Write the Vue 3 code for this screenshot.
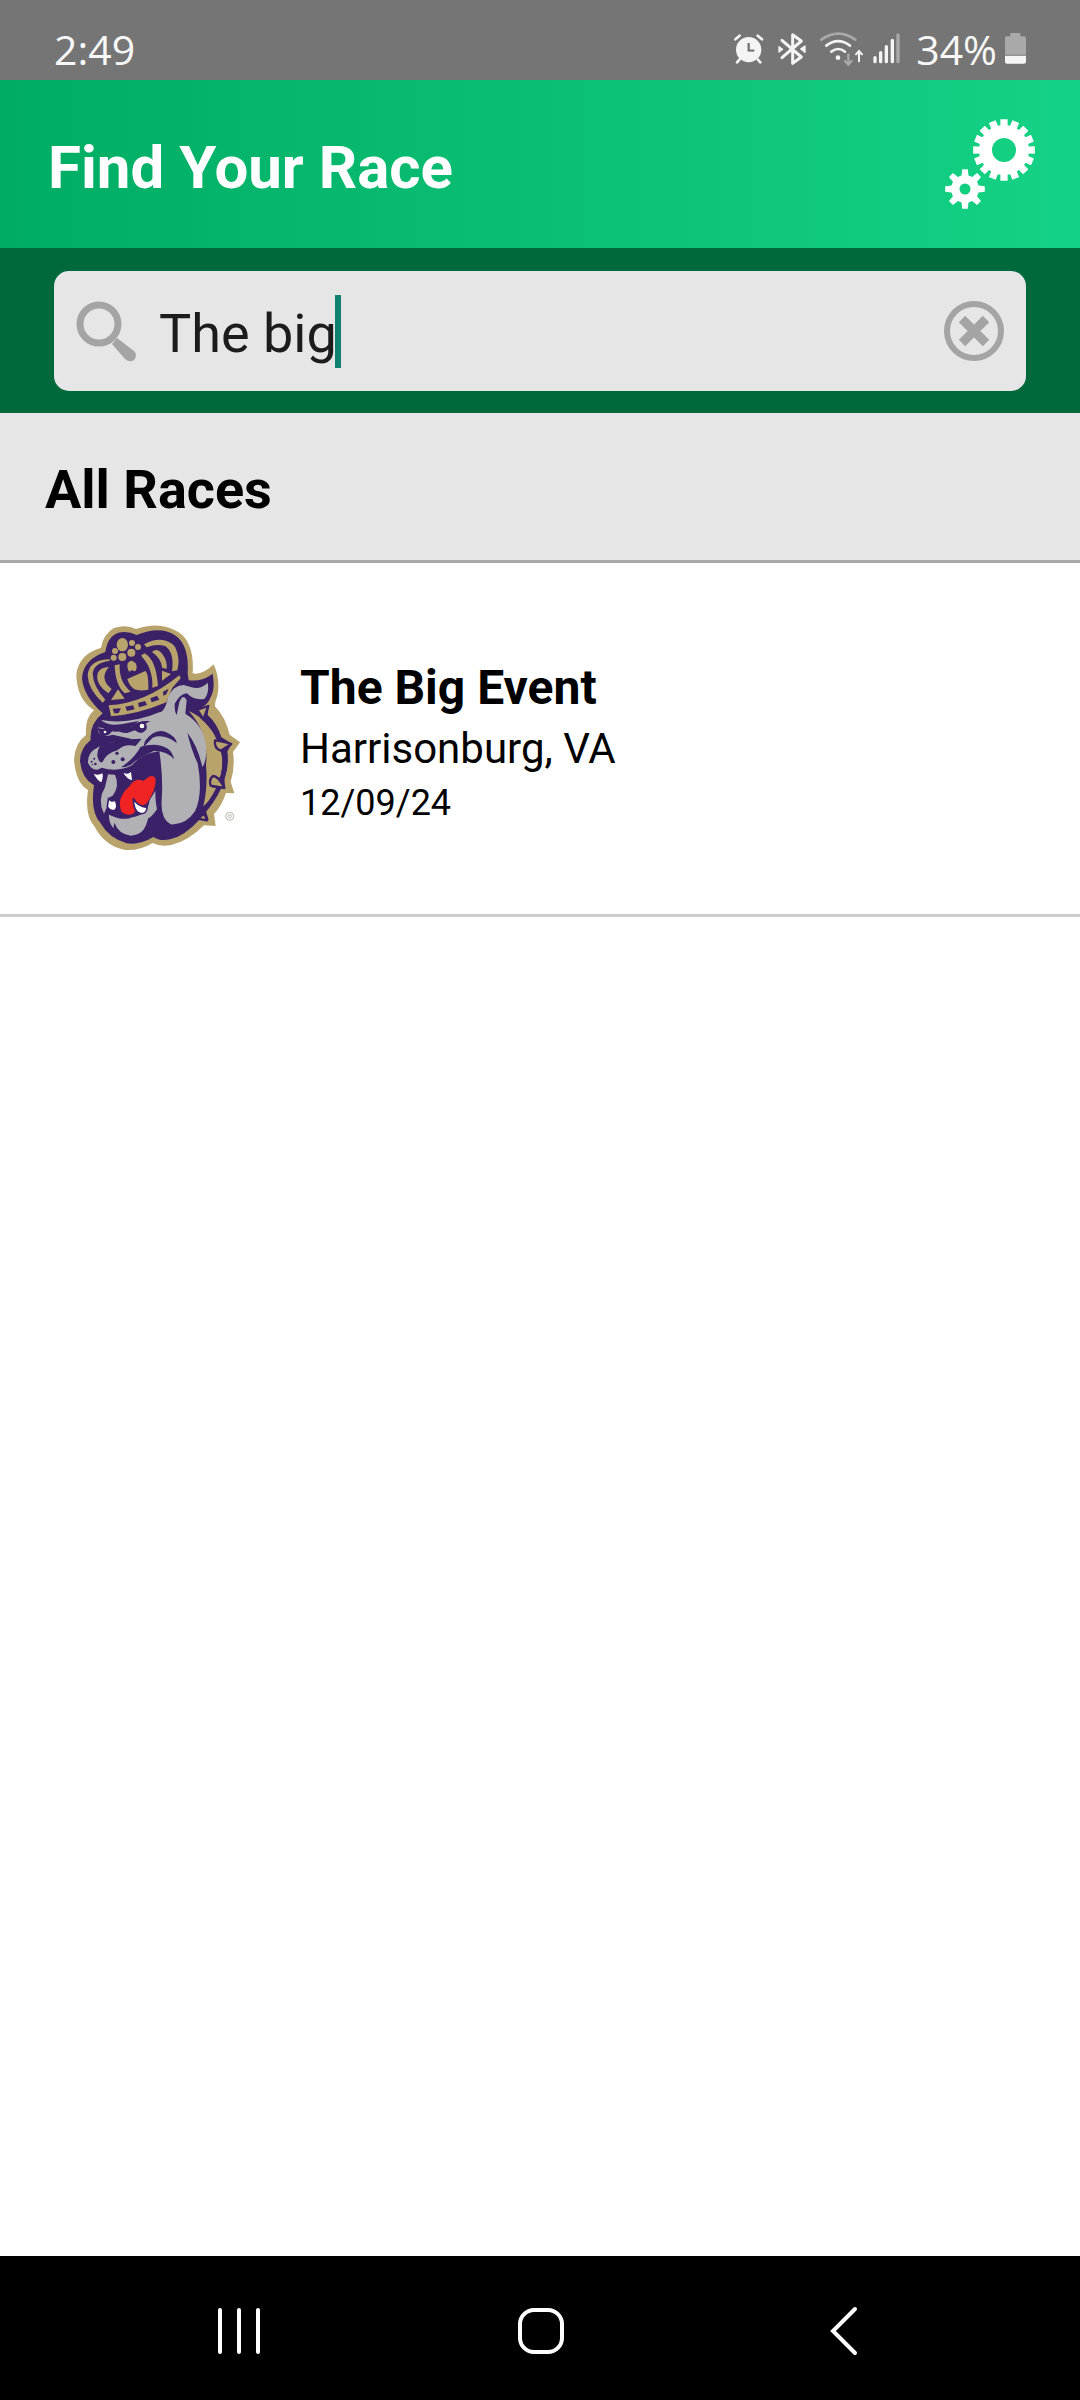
<script setup>
import { ref } from 'vue'

const query = ref('The big')
const races = [{ name: 'The Big Event', place: 'Harrisonburg, VA', date: '12/09/24' }]

function gear(cx, cy, teeth, outer, root, tip, base, hole) {
  const step = (Math.PI * 2) / teeth
  const point = (r, a) => `${(cx + r * Math.sin(a)).toFixed(2)} ${(cy - r * Math.cos(a)).toFixed(2)}`
  const points = []
  for (let i = 0; i < teeth; i++) {
    const a = i * step
    points.push(point(root, a - base * step), point(outer, a - tip * step))
    points.push(point(outer, a + tip * step), point(root, a + base * step))
  }
  return `M${points.join('L')}ZM${cx - hole} ${cy}a${hole} ${hole} 0 1 0 ${hole * 2} 0a${hole} ${hole} 0 1 0 ${-hole * 2} 0Z`
}

const gears = gear(59, 31, 16, 31, 25, 0.3, 0.37, 12) + gear(20, 70, 8, 20, 14, 0.18, 0.32, 5.5)
</script>

<template>
  <div class="screen">
    <div class="status">
      <span class="status-text time">2:49</span>
      <div class="status-icons">
        <svg width="33" height="36" viewBox="99 93 99 108" aria-label="Alarm">
          <g stroke="#f4f4f4" stroke-linecap="round" fill="none">
            <path d="M106 118l13-11M186 118l-13-11" stroke-width="8" />
            <path d="M119 178l-8 9M173 178l8 9" stroke-width="8" />
          </g>
          <circle cx="146" cy="149" r="38" fill="#f4f4f4" />
          <path d="M146 129v22l17 1" stroke="#757575" stroke-width="7" fill="none" />
        </svg>
        <svg width="30" height="36" viewBox="234 93 90 108" aria-label="Bluetooth">
          <path d="M246 121l58 50-26 19v-86l26 19-58 50" fill="none" stroke="#f4f4f4" stroke-width="9" stroke-linejoin="round" stroke-linecap="round" />
          <path d="M237 140l11 8-11 8zM315 138l-13 9 13 10z" fill="#f4f4f4" stroke="#f4f4f4" stroke-width="4" stroke-linejoin="round" />
        </svg>
        <svg width="40" height="36" viewBox="360 93 120 108" aria-label="Wi-Fi">
          <g fill="none" stroke="#f4f4f4" stroke-width="8" stroke-linecap="round">
            <path d="M364 119q51-36 102 0" stroke="#a9a9a9" />
            <path d="M379 137q35-27 71 0" />
            <path d="M394 155q21-16 41 0" />
            <path d="M445 163v28M435 183l10 11 10-11" stroke="#a9a9a9" stroke-width="7" />
            <path d="M477 184v-30M468 163l9-10 9 10" stroke-width="6" />
          </g>
          <circle cx="414" cy="173" r="7" fill="#f4f4f4" />
        </svg>
        <svg width="32" height="36" viewBox="516 93 96 108" aria-label="Signal">
          <g stroke="#f4f4f4" stroke-width="10" stroke-linecap="round">
            <path d="M525 173v12M542 158v27M559 140v45M577 121v64" />
            <path d="M594 105v80" stroke="#a9a9a9" />
          </g>
        </svg>
        <span class="status-text">34%</span>
        <svg class="battery" width="21" height="36" viewBox="915 93 63 108" aria-label="Battery">
          <path d="M931 99h30v10h11q6 0 6 6v49h-63v-49q0-6 6-6h10z" fill="#a9a9a9" />
          <path d="M915 167h63v18q0 6-6 6h-51q-6 0-6-6z" fill="#f6f6f6" />
        </svg>
      </div>
    </div>

    <header class="header">
      <h1>Find Your Race</h1>
      <button type="button" class="plain" aria-label="Settings">
        <svg width="90" height="90" viewBox="0 4 90 90">
          <path :d="gears" fill="#fff" fill-rule="evenodd" />
        </svg>
      </button>
    </header>

    <div class="search">
      <div class="search-box">
        <label class="search-label" for="race-search">
          <svg width="60" height="60" viewBox="0 0 60 60" role="img" aria-label="Search races">
            <circle cx="22" cy="23" r="19" fill="none" stroke="#a4a4a4" stroke-width="7" />
            <path d="M35 43l13 15q5 4 9 1 4-5 0-9L40 37z" fill="#a4a4a4" />
          </svg>
          <input id="race-search" v-model="query" type="text" autocomplete="off" />
          <span class="caret"></span>
        </label>
        <button type="button" class="plain" aria-label="Clear search" @click="query = ''">
          <svg width="60" height="60" viewBox="0 0 60 60">
            <circle cx="30" cy="30" r="27" fill="none" stroke="#a4a4a4" stroke-width="6" />
            <path d="M18 18l24 24M42 18L18 42" stroke="#a4a4a4" stroke-width="9" />
          </svg>
        </button>
      </div>
    </div>

    <h2 class="section">All Races</h2>

    <main class="list">
      <article v-for="race in races" :key="race.name" class="race">
        <svg class="mascot" width="190" height="250" viewBox="0 0 570 750" role="img" aria-label="Bulldog mascot">
          <!-- gold outer edge -->
          <path fill="#b9a36c" d="M162 54Q200 42 228 57Q300 32 355 66Q404 98 398 190Q428 196 461 163Q482 210 472 258Q462 284 466 290Q496 320 509 374L540 397L519 426Q526 470 512 515L523 550L498 549Q484 590 462 612L467 648L432 646Q384 694 334 705Q300 711 278 699Q238 723 196 720Q134 708 104 650Q73 618 84 540Q48 520 42 450Q44 400 78 375Q74 324 102 301Q50 268 49 193Q56 133 123 113Q130 72 162 54Z" />
          <!-- purple body -->
          <path fill="#3a2168" d="M175 68Q204 62 230 75Q300 46 345 76Q388 105 383 190L386 211Q426 216 458 191Q466 236 452 262Q442 286 425 291L447 287L443 315Q472 341 484 382L516 401L502 424Q508 468 493 506L496 535L477 534Q465 572 437 601L446 630L418 629Q374 678 330 688Q300 695 280 681Q238 706 200 700Q146 684 122 640Q90 606 102 526Q65 506 60 452Q60 416 92 390Q88 342 128 310Q70 258 66 205Q70 148 136 126Q142 80 175 68Z" />

          <!-- crown -->
          <g fill="#b9a36c">
            <path d="M252 103Q310 73 345 110Q362 145 352 181L336 184Q344 130 317 109Q292 99 260 112Z" />
            <path d="M276 126Q291 112 307 132Q323 154 320 176L307 174Q303 144 276 126Z" />
            <path d="M243 137L253 130Q288 147 294 228L277 233Q280 175 243 137Z" />
            <path d="M148 153Q103 158 98 190Q99 230 136 269L128 278Q84 238 83 196Q87 148 151 148Z" />
            <path d="M147 171Q116 206 155 237L145 250Q105 222 113 190Q121 171 147 171Z" />
            <path d="M164 166L179 163Q176 215 212 245L194 250Q166 226 164 166Z" />
            <path d="M202 207L256 183Q266 190 265 239Q240 244 223 238Q207 226 202 207Z" />
            <path d="M203 160q10-16 24 0q7 12-1 24l-11-3l-7 4q-8-9-5-25ZM306 182L333 192L306 212Z" />
            <path d="M153 270L174 238L194 266ZM146 286Q254 281 358 196L362 205L337 233L319 277Q234 313 153 319Z" />
            <ellipse cx="187" cy="104" rx="17" ry="20" />
            <circle cx="216" cy="99" r="9" /><circle cx="234" cy="111" r="9" />
            <circle cx="165" cy="123" r="9" /><circle cx="161" cy="143" r="9" />
            <circle cx="214" cy="128" r="12" /><circle cx="187" cy="141" r="12" />
          </g>
          <path fill="#3a2168" d="M158 296l25-1-7 14-13 1ZM196 290l23-4 5 12-23 5ZM234 279l21-6 6 12-24 7ZM271 265l20-8 7 12-23 8ZM309 245l17-9-7 17-9 4Z" />

          <!-- collar -->
          <path fill="#b9a36c" d="M386 303Q445 328 471 391L463 399L482 422Q493 460 481 501L448 513L454 532L471 535Q460 565 430 589Q444 530 438 465Q448 370 386 303Z" />
          <path fill="none" stroke="#3a2168" stroke-width="14" d="M424 318Q485 370 494 440Q500 526 425 610" />
          <g fill="#b9a36c" stroke="#3a2168" stroke-width="7" stroke-linejoin="round">
            <path d="M412 299L445 288L430 328Z" />
            <path d="M465 391Q485 393 514 402L482 422Q462 415 465 391Z" />
            <path d="M459 498Q476 498 493 534L452 527Q446 508 459 498Z" />
            <path d="M413 626L433 611L441 631Z" />
          </g>

          <!-- head -->
          <g fill="#b1b0b4">
            <path d="M123 330Q208 345 298 307Q315 307 325 258Q343 225 371 225L395 232Q421 240 443 218Q449 247 433 267Q401 272 381 250Q361 251 344 281Q343 305 350 315L358 277Q369 249 380 271L376 311Q440 350 439 427Q437 459 427 471Q413 407 382 368Q394 420 413 460Q430 550 405 604Q377 646 332 643Q301 627 305 569Q310 505 298 424Q244 430 216 466Q172 488 125 473Q100 490 84 459Q82 426 112 413Q152 386 182 405Q198 405 213 386L157 374Q129 384 115 366L113 353Q125 351 140 359Q166 371 202 359L237 333L183 343Q143 349 123 330Z" />
            <path d="M144 493L165 494Q180 527 158 557Q140 562 141 590L132 611Q111 571 135 532Z" />
            <path d="M147 614Q190 634 217 622Q263 615 269 570L286 543Q286 576 291 598Q273 624 265 624L258 646Q246 676 212 677Q176 672 163 638L160 655Q145 635 147 614Z" />
          </g>
          <g fill="#3a2168">
            <path d="M112 438Q113 393 153 397Q190 401 208 388L245 386L227 408Q194 399 172 421Q140 429 127 457Q117 460 112 438Z" />
            <path d="M255 393Q285 353 317 366Q347 378 351 400Q313 370 278 383L250 412Z" />
            <path d="M242 410Q291 396 321 415Q336 423 343 448Q319 422 281 423Q226 449 213 464Q195 473 183 472Q223 445 242 410Z" />
            <path d="M112 354L129 357Q145 350 158 360Q151 376 132 378Q118 376 112 354ZM172 356Q190 363 214 350Q230 331 270 333L257 341Q264 350 257 361Q244 377 225 361L202 369Q177 370 172 356Z" />
            <circle cx="171" cy="430" r="5" /><circle cx="188" cy="448" r="6" /><circle cx="160" cy="456" r="6" />
            <circle cx="103" cy="446" r="3" /><circle cx="95" cy="455" r="3" /><circle cx="106" cy="462" r="4" /><circle cx="97" cy="464" r="2" />
          </g>
          <path fill="#f02422" d="M185 606Q167 564 209 528Q226 500 251 513Q278 486 287 508Q288 539 265 572Q259 587 240 586L219 612Q199 618 185 606Z" />
          <g fill="#fff">
            <circle cx="246" cy="348" r="7" /><circle cx="135" cy="366" r="4" />
            <path d="M101 491Q114 498 127 490Q131 500 124 517Q112 511 101 491ZM190 488Q204 495 213 486L216 511Q200 506 190 488Z" />
            <path stroke="#3a2168" stroke-width="5" d="M146 563Q150 577 166 571Q176 589 165 601Q148 605 142 589Z" />
            <path stroke="#3a2168" stroke-width="5" d="M220 565Q233 590 261 592Q261 612 241 611Q220 606 220 565Z" />
          </g>
          <g fill="none" stroke="#b9b5aa" stroke-width="3">
            <circle cx="509" cy="619" r="12" /><circle cx="509" cy="619" r="5" />
          </g>
        </svg>
        <div class="details">
          <h3>{{ race.name }}</h3>
          <p class="place">{{ race.place }}</p>
          <p class="date">{{ race.date }}</p>
        </div>
      </article>
    </main>

    <nav class="navbar">
      <button type="button" class="plain" aria-label="Recent apps">
        <svg width="60" height="60" viewBox="0 0 60 60">
          <path d="M11 9v42M30 9v42M49 9v42" stroke="#fff" stroke-width="4" stroke-linecap="round" />
        </svg>
      </button>
      <button type="button" class="plain" aria-label="Home">
        <svg width="60" height="60" viewBox="0 0 60 60">
          <rect x="10" y="9" width="42" height="42" rx="14" fill="none" stroke="#fff" stroke-width="4" />
        </svg>
      </button>
      <button type="button" class="plain" aria-label="Back">
        <svg width="60" height="60" viewBox="0 0 60 60">
          <path d="M44 8L22 30l22 22" fill="none" stroke="#fff" stroke-width="4" stroke-linecap="round" />
        </svg>
      </button>
    </nav>
  </div>
</template>

<style>
body {
  margin: 0;
}
</style>

<style scoped>
.screen {
  display: flex;
  flex-direction: column;
  min-height: 100vh;
  background: #fff;
  color: #000;
  font-family: Roboto, "Liberation Sans", sans-serif;
}

h1,
h2,
h3,
p {
  margin: 0;
}

svg {
  display: block;
  flex: none;
  overflow: visible;
}

.plain {
  display: flex;
  padding: 0;
  border: 0;
  background: none;
}

.status {
  display: flex;
  justify-content: space-between;
  align-items: center;
  height: 80px;
  padding: 18px 54px 0;
  box-sizing: border-box;
  background: #757575;
}

.status-text {
  color: #f8f8f8;
  font-family: "Open Sans", "Noto Sans", sans-serif;
  font-size: 41px;
  line-height: 60px;
}

.status-icons {
  display: flex;
  align-items: center;
  gap: 12px;
}

.battery {
  margin-left: -4px;
}

.header {
  display: flex;
  justify-content: space-between;
  align-items: center;
  height: 168px;
  padding: 8px 45px 0 48px;
  box-sizing: border-box;
  background: linear-gradient(90deg, #00ac63, #14d285);
  color: #fff;
}

h1 {
  font-size: 60px;
  line-height: 72px;
  font-weight: 700;
}

.search {
  padding: 23px 54px 22px;
  background: #00693c;
}

.search-box {
  display: flex;
  align-items: center;
  height: 120px;
  padding: 0 22px 0 23px;
  border-radius: 15px;
  background: #e6e6e6;
}

.search-label {
  display: flex;
  flex: 1;
  align-items: center;
  min-width: 0;
}

.search-label input {
  field-sizing: content;
  min-width: 0;
  height: 72px;
  margin-left: 22px;
  padding: 4px 0 0;
  border: 0;
  outline: 0;
  background: none;
  color: #1c1c1c;
  caret-color: transparent;
  font-family: inherit;
  font-size: 54px;
}

.caret {
  width: 6px;
  height: 73px;
  margin-left: -2px;
  background: #0f8272;
}

.section {
  padding: 44px 45px 37px;
  border-bottom: 3px solid #a8a8a8;
  background: #e6e6e6;
  font-size: 54px;
  line-height: 66px;
  font-weight: 700;
}

.list {
  flex: 1;
}

.race {
  display: flex;
  align-items: flex-start;
  gap: 50px;
  padding: 47px 60px 54px;
  border-bottom: 3px solid #cdcdcd;
}

.details {
  padding-top: 48px;
}

h3 {
  font-size: 48px;
  line-height: 60px;
  font-weight: 700;
}

.place {
  font-size: 42px;
  line-height: 62px;
}

.date {
  font-size: 36px;
  line-height: 46px;
}

.navbar {
  display: flex;
  align-items: center;
  height: 144px;
  padding: 6px 88px 0;
  box-sizing: border-box;
  background: #000;
}

.navbar .plain {
  flex: 1;
  justify-content: center;
}
</style>
